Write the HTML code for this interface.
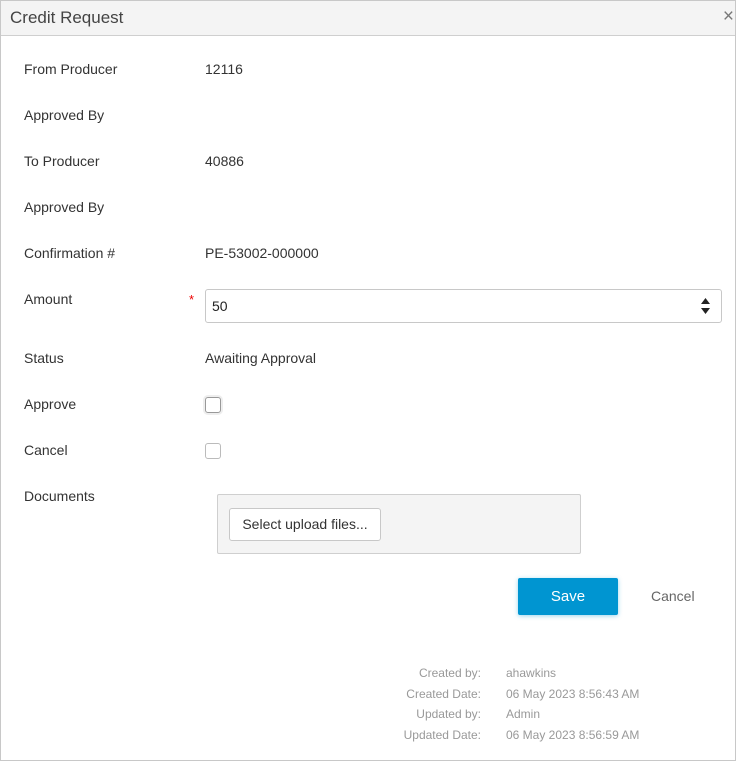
<!DOCTYPE html>
<html><head><style>
body{margin:0;width:736px;height:761px;overflow:hidden;background:#fff;font-family:"Liberation Sans",sans-serif;color:#333;}
.frame{position:absolute;left:0;top:0;width:734px;height:759px;border:1px solid #c8c8c8;}
.hdr{position:absolute;left:1px;top:1px;width:734px;height:34px;background:#f4f4f4;border-bottom:1px solid #cfcfcf;}
.hdr .t{position:absolute;left:9px;top:7px;font-size:17px;color:#444;}
.hdr .x{position:absolute;right:1px;top:5px;font-size:19px;color:#777;}
.l,.v{position:absolute;font-size:14px;line-height:16px;color:#333;}
.l{left:24px}.v{left:205px}
.inp{position:absolute;left:205px;top:289px;width:515px;height:32px;border:1px solid #c8c8c8;border-radius:3px;}
.inp span{position:absolute;left:6px;top:8px;font-size:14px;color:#222}
.cb{position:absolute;left:205px;width:14px;height:14px;border:1px solid #aaa;border-radius:3px;}
.up{position:absolute;left:217px;top:494px;width:362px;height:58px;background:#f4f4f4;border:1px solid #cfcfcf;border-radius:2px;}
.btn{position:absolute;left:11px;top:13px;width:150px;height:31px;background:#fff;border:1px solid #c8c8c8;border-radius:3px;font-size:14px;text-align:center;line-height:31px;color:#333}
.save{position:absolute;left:518px;top:578px;width:100px;height:37px;background:#0095d1;border-radius:2px;color:#fff;font-size:15px;text-align:center;line-height:37px;box-shadow:0 1px 5px rgba(0,149,209,.4)}
.cancel{position:absolute;left:651px;top:588px;font-size:14px;color:#666}
.m{position:absolute;font-size:12px;color:#999;}
.mr{right:255px;text-align:right}
.mv{left:506px}
</style></head><body>
<div class="frame"></div>
<div class="hdr"><span class="t">Credit Request</span><span class="x">×</span></div>
<div class="l" style="top:61px">From Producer</div><div class="v" style="top:61px">12116</div>
<div class="l" style="top:107px">Approved By</div>
<div class="l" style="top:153px">To Producer</div><div class="v" style="top:153px">40886</div>
<div class="l" style="top:199px">Approved By</div>
<div class="l" style="top:245px">Confirmation #</div><div class="v" style="top:245px">PE-53002-000000</div>
<div class="l" style="top:291px">Amount</div>
<div style="position:absolute;left:189px;top:292px;color:#e00;font-size:13px">*</div>
<div class="inp"><span>50</span>
<svg style="position:absolute;right:11px;top:8px" width="9" height="16"><path d="M4.5 0L9 6H0Z M0 10H9L4.5 16Z" fill="#222"/></svg></div>
<div class="l" style="top:350px">Status</div><div class="v" style="top:350px">Awaiting Approval</div>
<div class="l" style="top:396px">Approve</div><div class="cb" style="top:397px;border-color:#999;box-shadow:0 0 0 2px #eee"></div>
<div class="l" style="top:442px">Cancel</div><div class="cb" style="top:443px;border-color:#bbb"></div>
<div class="l" style="top:488px">Documents</div>
<div class="up"><div class="btn">Select upload files...</div></div>
<div class="save">Save</div><div class="cancel">Cancel</div>
<div class="m mr" style="top:666px">Created by:</div><div class="m mv" style="top:666px">ahawkins</div>
<div class="m mr" style="top:687px">Created Date:</div><div class="m mv" style="top:687px">06 May 2023 8:56:43 AM</div>
<div class="m mr" style="top:707px">Updated by:</div><div class="m mv" style="top:707px">Admin</div>
<div class="m mr" style="top:728px">Updated Date:</div><div class="m mv" style="top:728px">06 May 2023 8:56:59 AM</div>
</body></html>
